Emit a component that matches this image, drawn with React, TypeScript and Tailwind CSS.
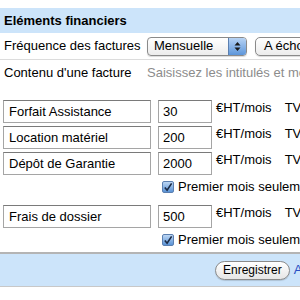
const lignes = [
  { label: 'Forfait Assistance', montant: '30', premierMois: false },
  { label: 'Location matériel', montant: '200', premierMois: false },
  { label: 'Dépôt de Garantie', montant: '2000', premierMois: true },
  { label: 'Frais de dossier', montant: '500', premierMois: true },
];

function CheckBox() {
  return (
    <span className="flex h-[12px] w-[12px] items-center justify-center rounded-[2px] border border-[#5b7fb0] bg-gradient-to-b from-[#bcd6f3] to-[#5a93d6]">
      <svg width="11" height="11" viewBox="0 0 11 11">
        <path d="M2 5.5 L4.5 8.5 L9.5 1" fill="none" stroke="#1b2a44" strokeWidth="1.8" />
      </svg>
    </span>
  );
}

export default function App() {
  return (
    <div className="h-[300px] w-[300px] overflow-hidden bg-white font-['Liberation_Sans',Arial,sans-serif] text-[13px] text-black">
      <div className="w-[420px] pt-[8px]">
        {/* Header */}
        <div className="flex h-[25px] items-center bg-[#cce4fa] pl-[4px] font-bold">
          Eléments financiers
        </div>

        {/* Fréquence */}
        <div className="flex h-[27px] items-center border-b border-[#dcdcdc]">
          <span className="w-[147px] pl-[4px]">Fréquence des factures</span>
          <div className="flex h-[19px] w-[100px] items-center overflow-hidden rounded-[4px] border border-[#8a8a8a] bg-gradient-to-b from-white to-[#ececec] shadow-[0_1px_1px_rgba(0,0,0,0.15)]">
            <span className="flex-1 pl-[6px]">Mensuelle</span>
            <span className="flex h-full w-[18px] items-center justify-center border-l border-[#5b7fb0] bg-gradient-to-b from-[#b7d3f4] to-[#5d96da]">
              <svg width="7" height="11" viewBox="0 0 7 11">
                <path d="M0.5 4.5 L3.5 1 L6.5 4.5 Z M0.5 6.5 L3.5 10 L6.5 6.5 Z" fill="#1a1a1a" />
              </svg>
            </span>
          </div>
          <div className="ml-[8px] flex h-[19px] items-center rounded-[5px] border border-[#8a8a8a] bg-gradient-to-b from-white to-[#ececec] px-[8px] shadow-[0_1px_1px_rgba(0,0,0,0.15)]">
            A échoir
          </div>
        </div>

        {/* Contenu */}
        <div className="flex h-[26px] items-center">
          <span className="w-[147px] pl-[4px]">Contenu d'une facture</span>
          <span className="text-[#8c8c8c]">Saisissez les intitulés et montants</span>
        </div>

        {/* Lignes */}
        <div className="flex flex-col pl-[3px] pt-[14px]">
          {lignes.map((l, i) => (
            <div
              key={l.label}
              className={
                i === lignes.length - 1 ? 'flex flex-col' : l.premierMois ? 'mb-[6px] flex flex-col' : 'mb-[3px] flex flex-col'
              }
            >
              <div className="flex items-start">
                <div className="flex h-[23px] w-[148px] items-center border border-[#a5a5a5] border-t-[#7a7a7a] pl-[5px]">
                  {l.label}
                </div>
                <div className="ml-[7px] flex h-[23px] w-[54px] items-center border border-[#a5a5a5] border-t-[#7a7a7a] pl-[4px]">
                  {l.montant}
                </div>
                <span className="ml-[4px] leading-[16px]">€HT/mois</span>
                <span className="ml-[13px] leading-[16px]">TVA</span>
              </div>
              {l.premierMois && (
                <div className="flex h-[24px] items-center pl-[159px]">
                  <CheckBox />
                  <span className="ml-[4px]">Premier mois seulement</span>
                </div>
              )}
            </div>
          ))}
        </div>

        {/* Footer */}
        <div className="flex h-[35px] items-center border-t-2 border-b border-t-[#b4b4b4] border-b-[#c8c8c8] bg-[#cce4fa] pl-[215px]">
          <span className="flex h-[19px] items-center rounded-full border border-[#8a8a8a] bg-gradient-to-b from-white to-[#e6e6e6] px-[7px] text-[12px] shadow-[0_1px_1px_rgba(0,0,0,0.15)]">
            Enregistrer
          </span>
          <span className="ml-[4px] text-[#2a4fc4]">Annuler</span>
        </div>
      </div>
    </div>
  );
}
